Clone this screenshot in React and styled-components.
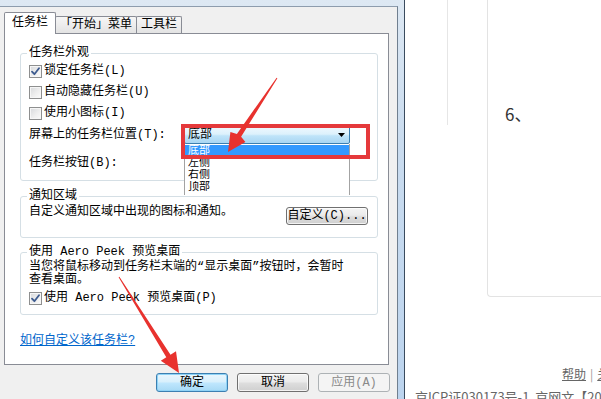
import React from 'react';
import styled, { createGlobalStyle, css } from 'styled-components';

const GlobalStyle = createGlobalStyle`
  html, body { margin: 0; padding: 0; background: #fff; }
  body { width: 601px; height: 399px; overflow: hidden; }
  #root { width: 601px; height: 399px; }
`;

const Screen = styled.div`
  position: relative;
  display: flex;
  width: 601px;
  height: 399px;
  overflow: hidden;
  background: #fff;
`;

/* ---------- Dialog window ---------- */
const WindowFrame = styled.div`
  flex: 0 0 405px;
  box-sizing: border-box;
  height: 399px;
  display: flex;
  padding: 6px 6px 0 0;
  background: linear-gradient(180deg, #dde8f3 0%, #cadcef 35%, #bcd4ee 100%);
  border-right: 1px solid #3a4b5e;
`;

const Client = styled.div`
  flex: 1;
  box-sizing: border-box;
  display: flex;
  flex-direction: column;
  padding: 0 8px 0 4px;
  background: #f0f0f0;
  border-top: 1px solid #8d9cad;
  border-right: 1px solid #707f8f;
  font-family: "Liberation Mono", "Noto Sans CJK SC", monospace;
  font-size: 12px;
  color: #000;
`;

const TabStrip = styled.div`
  position: relative;
  z-index: 2;
  display: flex;
  align-items: flex-end;
  height: 26px;
`;

const Tab = styled.div`
  position: relative;
  box-sizing: border-box;
  display: flex;
  align-items: center;
  height: ${p => (p.$active ? 22 : 17)}px;
  margin-bottom: ${p => (p.$active ? -1 : 0)}px;
  margin-left: ${p => (p.$first ? 0 : -1)}px;
  padding: 0 ${p => (p.$active ? 7 : 4)}px ${p => (p.$active ? 1 : 0)}px;
  border: 1px solid #898c95;
  border-bottom: none;
  border-radius: 2px 2px 0 0;
  background: ${p => (p.$active ? '#fff' : 'linear-gradient(180deg, #f6f6f6 0%, #ececec 55%, #e3e3e3 100%)')};
  z-index: ${p => (p.$active ? 2 : 1)};
  line-height: 14px;
  white-space: nowrap;
`;

const Panel = styled.div`
  box-sizing: border-box;
  height: 332px;
  display: flex;
  flex-direction: column;
  padding: 0 10px 0 15px;
  background: #fff;
  border: 1px solid #898c95;
`;

const Group = styled.div`
  position: relative;
  box-sizing: border-box;
  display: flex;
  flex-direction: column;
  margin-top: ${p => p.$mt}px;
  padding: ${p => p.$pad};
  border: 1px solid #d5dfe5;
  border-radius: 3px;
`;

const Legend = styled.span`
  position: absolute;
  top: -8px;
  left: 6px;
  padding: 0 2px;
  background: #fff;
  line-height: 14px;
  white-space: nowrap;
`;

const CheckRow = styled.label`
  display: flex;
  align-items: center;
  gap: 2px;
  height: 16px;
  margin-top: ${p => p.$mt || 0}px;
  line-height: 14px;
  white-space: nowrap;
`;

const Box = styled.span`
  box-sizing: border-box;
  width: 13px;
  height: 13px;
  display: flex;
  align-items: center;
  justify-content: center;
  border: 1px solid #8e8f8f;
  background: linear-gradient(135deg, #d6d8db 0%, #eeeeee 55%, #fbfbfb 100%);
  box-shadow: inset 0 0 0 1px #f6f6f6;
`;

const FieldRow = styled.div`
  display: flex;
  align-items: center;
  height: 18px;
  margin-top: ${p => p.$mt || 0}px;
  line-height: 14px;
  white-space: nowrap;
`;

const FieldLabel = styled.span`
  width: 155px;
  flex: 0 0 155px;
`;

const ComboWrap = styled.div`
  position: relative;
  z-index: 3;
`;

const Combo = styled.div`
  box-sizing: border-box;
  width: 166px;
  height: 18px;
  display: flex;
  align-items: center;
  justify-content: space-between;
  padding: 0 4px 0 3px;
  border: 1px solid #3c7fb1;
  border-radius: 2px;
  background: linear-gradient(180deg, #eef8fe 0%, #dcf1fc 45%, #bfe4f9 55%, #a9d6f3 100%);
  line-height: 14px;
`;

const DropList = styled.div`
  position: absolute;
  top: 100%;
  left: 0;
  box-sizing: border-box;
  width: 166px;
  height: 51px;
  padding-top: 1px;
  background: #fff;
  border-left: 1px solid #a3a3a3;
  border-right: 1px solid #a3a3a3;
`;

const DropItem = styled.div`
  height: 12px;
  padding-left: 3px;
  font-size: 11px;
  line-height: 12px;
  overflow: hidden;
  background: ${p => (p.$sel ? '#3399ff' : 'transparent')};
  color: ${p => (p.$sel ? '#fff' : '#000')};
`;

const InfoRow = styled.div`
  display: flex;
  align-items: flex-start;
  justify-content: space-between;
`;

const InfoText = styled.span`
  line-height: 14px;
  white-space: nowrap;
`;

const Para = styled.p`
  margin: 0;
  line-height: 13px;
  white-space: nowrap;
`;

const Btn = styled.button`
  box-sizing: border-box;
  width: ${p => p.$w}px;
  height: ${p => p.$h}px;
  margin-top: ${p => p.$mt || 0}px;
  padding: 0;
  font: inherit;
  line-height: 14px;
  color: #000;
  border: 1px solid #707070;
  border-radius: 3px;
  background: linear-gradient(180deg, #f4f4f4 0%, #ebebeb 45%, #dddddd 55%, #cfcfcf 100%);
  box-shadow: inset 0 0 0 1px rgba(255, 255, 255, 0.75);
  white-space: nowrap;
  ${p =>
    p.$default &&
    css`
      border-color: #3c7fb1;
      background: linear-gradient(180deg, #eaf6fd 0%, #d9f0fc 45%, #bee6fd 55%, #a7d9f5 100%);
      box-shadow: inset 0 0 0 1px #8fd3f6;
    `}
  ${p =>
    p.disabled &&
    css`
      color: #8a8a8a;
      border-color: #adb2b5;
      background: #f4f4f4;
      box-shadow: none;
    `}
`;

const HelpLink = styled.a`
  align-self: flex-start;
  margin-top: 19px;
  line-height: 14px;
  color: #0066cc;
  text-decoration: underline;
  white-space: nowrap;
`;

const ButtonRow = styled.div`
  display: flex;
  justify-content: flex-end;
  gap: 9px;
  margin: 8px -1px 0 0;
`;

/* ---------- Web page behind ---------- */
const Page = styled.div`
  flex: 1;
  display: flex;
  flex-direction: column;
  font-family: "Noto Sans CJK SC", sans-serif;
  color: #666;
  min-width: 0;
`;

const PageTop = styled.div`
  display: flex;
  height: 297px;
`;

const SideCol = styled.div`
  box-sizing: border-box;
  flex: 0 0 43px;
  height: 125px;
  border-right: 1px solid #e6e6e6;
`;

const Spacer = styled.div`
  flex: 0 0 39px;
`;

const Card = styled.div`
  box-sizing: border-box;
  flex: 1;
  height: 297px;
  padding: 104px 0 0 17px;
  border-left: 1px solid #e3e3e3;
  border-bottom: 1px solid #e3e3e3;
  border-bottom-left-radius: 4px;
`;

const StepNum = styled.div`
  font-size: 17px;
  line-height: 20px;
  color: #333;
`;

const FooterLinks = styled.div`
  margin-top: 69px;
  padding-left: 157px;
  font-size: 12px;
  line-height: 16px;
  white-space: nowrap;
`;

const FooterLink = styled.span`
  text-decoration: underline;
`;

const Sep = styled.span`
  margin: 0 4px;
  color: #999;
`;

const Icp = styled.div`
  margin-top: 6px;
  padding-left: 10px;
  font-size: 13px;
  line-height: 18px;
  white-space: nowrap;
`;

/* ---------- Annotations ---------- */
const Overlay = styled.svg`
  position: absolute;
  left: 0;
  top: 0;
  z-index: 10;
  pointer-events: none;
`;

const Check = () => (
  <svg width="9" height="9" viewBox="0 0 9 9">
    <path d="M1 4.6 L3.4 7.2 L8 1.2" fill="none" stroke="#3d5b8f" strokeWidth="1.8" strokeLinecap="round" strokeLinejoin="round" />
  </svg>
);

const Arrow = () => (
  <svg width="7" height="4" viewBox="0 0 7 4">
    <path d="M0 0 H7 L3.5 4 Z" fill="#000" />
  </svg>
);

const CheckItem = ({ checked, children, mt }) => (
  <CheckRow $mt={mt}>
    <Box>{checked && <Check />}</Box>
    <span>{children}</span>
  </CheckRow>
);

export default function App() {
  return (
    <>
      <GlobalStyle />
      <Screen>
        <WindowFrame>
          <Client>
            <TabStrip>
              <Tab $active $first>任务栏</Tab>
              <Tab>「开始」菜单</Tab>
              <Tab>工具栏</Tab>
            </TabStrip>
            <Panel>
              <Group $mt={19} $pad="9px 9px 8px 8px">
                <Legend>任务栏外观</Legend>
                <CheckItem checked>锁定任务栏(L)</CheckItem>
                <CheckItem mt={5}>自动隐藏任务栏(U)</CheckItem>
                <CheckItem mt={5}>使用小图标(I)</CheckItem>
                <FieldRow $mt={5}>
                  <FieldLabel>屏幕上的任务栏位置(T):</FieldLabel>
                  <ComboWrap>
                    <Combo>
                      <span>底部</span>
                      <Arrow />
                    </Combo>
                    <DropList>
                      <DropItem $sel>底部</DropItem>
                      <DropItem>左侧</DropItem>
                      <DropItem>右侧</DropItem>
                      <DropItem>顶部</DropItem>
                    </DropList>
                  </ComboWrap>
                </FieldRow>
                <FieldRow $mt={10}>
                  <FieldLabel>任务栏按钮(B):</FieldLabel>
                </FieldRow>
              </Group>

              <Group $mt={15} $pad="8px 9px 12px 8px">
                <Legend>通知区域</Legend>
                <InfoRow>
                  <InfoText>自定义通知区域中出现的图标和通知。</InfoText>
                  <Btn $w={82} $h={18} $mt={2}>自定义(C)...</Btn>
                </InfoRow>
              </Group>

              <Group $mt={14} $pad="8px 9px 8px 8px">
                <Legend>使用 Aero Peek 预览桌面</Legend>
                <Para>
                  当您将鼠标移动到任务栏末端的“显示桌面”按钮时，会暂时
                  <br />
                  查看桌面。
                </Para>
                <CheckItem checked mt={3}>使用 Aero Peek 预览桌面(P)</CheckItem>
              </Group>

              <HelpLink>如何自定义该任务栏?</HelpLink>
            </Panel>

            <ButtonRow>
              <Btn $w={72} $h={19} $default>确定</Btn>
              <Btn $w={72} $h={19}>取消</Btn>
              <Btn $w={72} $h={19} disabled>应用(A)</Btn>
            </ButtonRow>
          </Client>
        </WindowFrame>

        <Page>
          <PageTop>
            <SideCol />
            <Spacer />
            <Card>
              <StepNum>6、</StepNum>
            </Card>
          </PageTop>
          <FooterLinks>
            <FooterLink>帮助</FooterLink>
            <Sep>|</Sep>
            <FooterLink>关于百度</FooterLink>
          </FooterLinks>
          <Icp>京ICP证030173号-1&nbsp;&nbsp;京网文【2013】0934-983号</Icp>
        </Page>

        <Overlay width="601" height="399" viewBox="0 0 601 399">
          <rect x="183" y="126" width="185" height="31" fill="none" stroke="#e5393b" strokeWidth="4" />
          <polygon
            points="277.4,78.3 241.1,136.7 245.4,142 228,152 230.4,132 236.9,133.9 276.6,77.7"
            fill="#e8322e"
          />
          <polygon
            points="119.4,276.7 170.5,354.7 176,351.2 179,373 160.8,360.8 166.3,357.3 118.6,277.3"
            fill="#e8322e"
          />
        </Overlay>
      </Screen>
    </>
  );
}
